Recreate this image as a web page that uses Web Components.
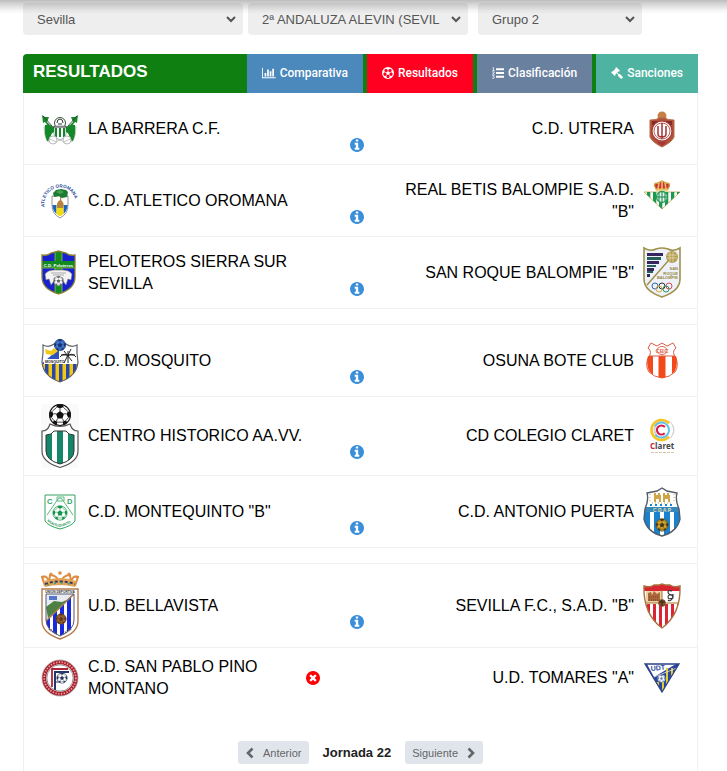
<!DOCTYPE html>
<html lang="es">
<head>
<meta charset="utf-8">
<meta name="viewport" content="width=device-width, initial-scale=1">
<title>Resultados</title>
<style>
  html, body { margin: 0; }
  body { background: #fff; color: #000; font-family: "Liberation Sans", Arial, sans-serif; font-size: 16px; line-height: 22px; }
</style>
</head>
<body>
<results-page></results-page>

<script>
const CIRCLE = 'q0 209-103 385.5t-279.5 279.5-385.5 103-385.5-103-279.5-279.5-103-385.5 103-385.5 279.5-279.5 385.5-103 385.5 103 279.5 279.5 103 385.5z';
const ICONS = {
  chart: ['0 0 2048 1792', '<path d="M640 896v512h-256v-512h256zm384-512v1024h-256v-1024h256zm1024 1152v128h-2048v-1536h128v1408h1920zm-640-896v768h-256v-768h256zm384-384v1152h-256v-1152h256z"/>'],
  ball: ['0 0 24 24', '<path fill-rule="evenodd" d="M12 0a12 12 0 1 0 0 24a12 12 0 0 0 0-24zM7.6 3.5L12 6L16.4 3.5L19.5 6L18.5 10L21.6 13.5L20 17.5L15.6 17.8L13.8 21.8H10.2L8.4 17.8L4 17.5L2.4 13.5L5.5 10L4.500 6z"/><path d="M12 8l4 3-1.500 4.600h-5L8 11z"/><path fill="none" stroke="currentColor" stroke-width="1.500" d="M12 8V5M16 11l3-1M14.500 15.500l2 3M9.500 15.500l-2 3M8 11l-3-1"/>'],
  list: ['0 0 24 24', '<path d="M8 2.500h16v4H8zM8 10h16v4H8zM8 17.500h16v4H8z"/><path fill="none" stroke="currentColor" stroke-width="1.500" d="M1 2l2-1v6M.5 7.200h5M.5 10h4v1.500L1 14.500h4M.5 17.500h4l-2 2.200q2.500 0 2 2t-4 1"/>'],
  gavel: ['0 0 1792 1792', '<path d="M1771 1536q0 53-37 90l-107 108q-39 37-91 37-53 0-90-37l-363-364q-38-36-38-90 0-53 43-96l-256-256-126 126q-14 14-34 14t-34-14q2 2 12.5 12t12.5 13 10 11.5 10 13.5 6 13.5 5.5 16.5 1.5 18q0 38-28 68-3 3-16.5 18t-19 20.5-18.5 16.5-22 15.5-22 9-26 4.5q-40 0-68-28l-408-408q-28-28-28-68 0-13 4.5-26t9-22 15.5-22 16.5-18.5 20.5-19 18-16.5q30-28 68-28 10 0 18 1.5t16.5 5.5 13.5 6 13.5 10 11.5 10 13 12.5 12 12.5q-14-14-14-34t14-34l348-348q14-14 34-14t34 14q-2-2-12.5-12t-12.5-13-10-11.5-10-13.5-6-13.5-5.5-16.5-1.5-18q0-38 28-68 3-3 16.5-18t19-20.5 18.5-16.5 22-15.5 22-9 26-4.5q40 0 68 28l408 408q28 28 28 68 0 13-4.5 26t-9 22-15.5 22-16.5 18.5-20.5 19-18 16.5q-30 28-68 28-10 0-18-1.5t-16.5-5.5-13.5-6-13.5-10-11.5-10-13-12.5-12-12.5q14 14 14 34t-14 34l-126 126 256 256q43-43 96-43 52 0 91 37l363 363q37 39 37 91z"/>'],
  info: ['128 128 1536 1536', '<path d="M1152 1376v-160q0-14-9-23t-23-9h-96v-512q0-14-9-23t-23-9h-320q-14 0-23 9t-9 23v160q0 14 9 23t23 9h96v320h-96q-14 0-23 9t-9 23v160q0 14 9 23t23 9h448q14 0 23-9t9-23zm-128-896v-160q0-14-9-23t-23-9h-192q-14 0-23 9t-9 23v160q0 14 9 23t23 9h192q14 0 23-9t9-23zm640 416' + CIRCLE + '"/>'],
  cancel: ['128 128 1536 1536', '<path d="M1277 1122q0-26-19-45l-181-181 181-181q19-19 19-45 0-27-19-46l-90-90q-19-19-46-19-26 0-45 19l-181 181-181-181q-19-19-45-19-27 0-46 19l-90 90q-19 19-19 46 0 26 19 45l181 181-181 181q-19 19-19 45 0 27 19 46l90 90q19 19 46 19 26 0 45-19l181-181 181 181q19 19 45 19 27 0 46-19l90-90q19-19 19-46zm387-226' + CIRCLE + '"/>'],
  prev: ['0 0 10 12', '<path fill="none" stroke="currentColor" stroke-width="2.6" d="M7.500 1.500L3 6l4.500 4.500"/>'],
  next: ['0 0 10 12', '<path fill="none" stroke="currentColor" stroke-width="2.6" d="M2.500 1.500L7 6l-4.500 4.500"/>']
};

const ball = (x, y, r, ink, paper = '#fff') => {
  const s = r / 10;
  return `<g transform="translate(${x} ${y}) scale(${s})"><circle r="9.500" fill="${paper}" stroke="${ink}" stroke-width="1"/>
    <path fill="${ink}" d="M0-3.600L3.600-1L2.200 3.200H-2.200L-3.600-1zM-3-9.500Q0-10 3-9.500L3.200-7.200L0-5.800L-3.200-7.200zM9.400-2.500L7-3.500L6-.5L7.500 2.500L9.300 2zM-9.400-2.500L-7-3.500L-6-.5L-7.500 2.500L-9.300 2zM6.600 7L5.500 4.800L2.800 6L2.600 9.200zM-6.600 7L-5.500 4.800L-2.800 6L-2.600 9.200z"/>
    <path stroke="${ink}" stroke-width=".7" fill="none" d="M0-3.600V-6M3.600-1L6-1.200M2.200 3.200L3.500 6M-2.200 3.200L-3.500 6M-3.600-1L-6-1.200M3-7L7-3.500M-3-7L-7-3.500M7.500 2.500L5.500 5M-7.500 2.500L-5.500 5M-2.800 6.500H2.800"/></g>`;
};
const stripes = (xs, w, y, h, color) => `<path fill="${color}" d="${xs.map(x => `M${x} ${y}h${w}v${h}h-${w}z`).join('')}"/>`;

/* Club crests: [width, height, drawing] */
const CRESTS = {
  barrera: [38, 32, `
    <path fill="#198a2b" d="M1 2l3 2 4 0-2 5 4 4-2 1-4-5-2 1zM37 2l-3 2-4 0 2 5-4 4 2 1 4-5 2 1z"/>
    <path stroke="#333" stroke-width=".8" d="M2 3l10 11M36 3L26 14"/>
    <path fill="#fff" stroke="#aaa" stroke-width=".6" d="M3 14q4-3 9 0l7 5 7-5q5-3 9 0 0 9-3 14-6 3-13-1-7 4-13 1-3-5-3-14z"/>
    <path fill="#148927" d="M4 12q6-1 9 3v4q-4 1-3 8l-4 1q-3-7-2-16zM34 12q-6-1-9 3v4q4 1 3 8l4 1q3-7 2-16z"/>
    <circle cx="19" cy="10" r="5.500" fill="#fff" stroke="#34563a"/><path fill="none" stroke="#333" d="M16 10q0-4 3-4t3 4M17 11h4"/>
    <path fill="#fff" stroke="#456" stroke-width=".5" d="M13 13h12v8q-1 5-6 6-5-1-6-6z"/>
    <path stroke="#333" d="M12 14h14"/>${stripes([14, 18, 22], 2, 15, 9, '#148927')}
    <circle cx="12" cy="27" r="4" fill="#fff" stroke="#bbb"/><circle cx="26" cy="27" r="4" fill="#fff" stroke="#bbb"/><path stroke="#999" fill="none" stroke-width=".6" d="M9 26l6 3M23 29l6-3"/>`],
  oromana: [38, 38, `
    <defs><path id="arc" d="M3.500 25C1 -1 37 -1 34.500 25"/></defs>
    <text font-size="4.600" font-weight="700" fill="#2b4a9c" font-family="Liberation Sans"><textPath href="#arc">ATLETICO OROMANA</textPath></text>
    <path fill="#fff" stroke="#666" stroke-width=".7" d="M11 14h16v9q0 9-8 13-8-4-8-13z"/>
    <path fill="#1665c0" d="M11.500 23h4v9q-4-4-4-9zM22.500 23h4q0 5-4 9z"/>
    <path fill="#f4dc13" d="M15.500 24h7v8l-3.500 2.500-3.500-2.500z"/>
    <path fill="#b6843c" d="M19 13h2l-1 5q4 3 2 8h-6q-1-6 3-8z"/>
    <path fill="#1f7a35" d="M12 11l3-3 5-1 5 1 2 2-1 5-5 1-3-2-5 1z"/><path fill="#48a34a" d="M15 10l4-2 4 2-4 2z"/>`],
  peloteros: [38, 46, `
    <clipPath id="c"><path d="M1 5q6 1 9-2l7.500-2L25 3q3 3 9 2v22q0 12-16.500 17Q1 39 1 27z"/></clipPath>
    <g clip-path="url(#c)"><path fill="#1721cf" d="M0 0h36v46H0z"/><path fill="#118a21" d="M14 0h7v46h-7zM0 11h36v7H0z"/>
    <path stroke="#cce032" stroke-width=".6" fill="none" d="M14 0v11M21 0v11M14 18v28M21 18v28M0 18h36"/></g>
    <path fill="none" stroke="#8a8132" stroke-width="1.300" d="M1 5q6 1 9-2l7.500-2L25 3q3 3 9 2v22q0 12-16.500 17Q1 39 1 27z"/>
    <text x="17.500" y="16.500" text-anchor="middle" font-size="4.300" font-weight="700" fill="#fff" font-family="Liberation Sans">C.D. Peloteros</text>
    <path fill="#f3f3f3" stroke="#777" stroke-width=".6" d="M4 24q3-4 9-4h9q6 0 9 4l-1 6-3-1-2 6-3-4 0-3q-4-2-9 0v3l-3 4-2-6-3 1z"/><path stroke="#999" stroke-width=".8" d="M10 23h15M12 25h11"/>${ball(17.500, 31, 5, '#666')}`],
  mosquito: [38, 44, `
    <clipPath id="c"><path d="M2 6q6 3 11-1h12q5 4 11 1v8l1 9q-1 14-18 20Q2 37 1 23l1-9z"/></clipPath>
    <g clip-path="url(#c)"><path fill="#fff" d="M0 0h38v44H0z"/><path fill="#f3c811" d="M0 25h38v19H0z"/>${stripes([4, 11, 18, 25, 32], 3.500, 25, 19, '#2847ad')}
    <path fill="#3152bd" d="M0 25L18 10V25z"/><path fill="#f2c817" d="M4 10l6 2 3-3 4 3-5 4-7-1z"/><path fill="#fff" d="M3 20h21v5H3z"/></g>
    <path fill="none" stroke="#606369" stroke-width="1.200" d="M2 6q6 3 11-1h12q5 4 11 1v8l1 9q-1 14-18 20Q2 37 1 23l1-9z"/>
    <path fill="none" stroke="#222" stroke-width="1" d="M20 16h14M27 12v12M23 12l8 10M30 10l-7 14M19 18q4-5 8-1 4-4 8 1"/>
    <text x="4" y="24" font-size="3.600" font-weight="700" fill="#222" font-family="Liberation Sans">MOSQUITO</text>
    ${ball(19, 6, 6, '#173276', '#4577c8')}`],
  centro: [38, 64, `
    <path fill="#fafafa" d="M0 0h38v64H0z"/>${ball(19, 11, 11, '#111')}
    <path fill="#fff" stroke="#555" stroke-width="1.200" d="M1 27q6 0 8-7 10 5 20 0 2 7 8 7v20q0 11-18 16.500Q1 58 1 47z"/>
    <clipPath id="c"><path d="M5 31q6 0 8-4h12q2 4 8 4v16q0 9-14 13Q5 56 5 47z"/></clipPath>
    <g clip-path="url(#c)"><path fill="#fff" d="M0 20h38v44H0z"/>${stripes([5, 16, 27], 6, 20, 44, '#16866b')}</g>
    <path fill="none" stroke="#333" stroke-width="1" d="M5 31q6 0 8-4h12q2 4 8 4v16q0 9-14 13Q5 56 5 47z"/>`],
  montequinto: [38, 36, `
    <path fill="#fff" stroke="#32a362" stroke-width="1" d="M4 1h30v26q-3 5-15 8Q7 32 4 27z"/>
    <path fill="none" stroke="#5cbb80" d="M6 21L17 5q2-2 4 0l11 16M16 3h7v4h-7z"/>
    <text x="6" y="10" font-size="7.500" font-weight="700" fill="#32a362" font-family="Liberation Sans">C</text><text x="26" y="10" font-size="7.500" font-weight="700" fill="#32a362" font-family="Liberation Sans">D</text>
    ${ball(19, 19, 7.500, '#16964a')}
    <defs><path id="arc" d="M6 27Q19 39 34 25"/></defs><text font-size="3.500" font-weight="700" fill="#259657" font-family="Liberation Sans"><textPath href="#arc">MONTEQUINTO</textPath></text>`],
  bellavista: [38, 69, `
    <path fill="none" stroke="#d98c42" stroke-width="2" d="M4 15L1 6q6-2 7 6l1-8q7 0 10 8 3-8 10-8l1 8q1-8 7-6l-3 9"/>
    <g fill="#df8d3f"><circle cx="2" cy="6" r="1.500"/><circle cx="10" cy="3" r="1.500"/><circle cx="19" cy="2" r="1.800"/><circle cx="28" cy="3" r="1.500"/><circle cx="36" cy="6" r="1.500"/></g>
    <path fill="#e5a255" d="M3 10q16-6 32 0l-1 6q-15-4-30 0z"/><path stroke="#333d62" stroke-width="2" stroke-dasharray="3 2" fill="none" d="M4 13q15-5 30 0"/><path stroke="#36a28f" stroke-width="1.500" stroke-dasharray="2 5" fill="none" d="M6 14q13-4 26 0"/>
    <clipPath id="c"><path d="M5 23h28v26q0 10-14 16Q5 59 5 49z"/></clipPath>
    <path fill="#fff" stroke="#b57b4c" stroke-width="1.400" d="M1 18h36v32q0 12-18 18Q1 62 1 50z"/>
    <g clip-path="url(#c)"><path fill="#fff" d="M0 20h38v49H0z"/>${stripes([5, 12, 19, 26], 4, 20, 49, '#1829e0')}<path fill="#e8ecf1" d="M5 23h27L5 50z"/><path fill="#4d8042" d="M5 36l8-6 8 1 9-4L7 47z"/><path fill="#5876c9" d="M8 25h8v4H8z"/><path stroke="#a97c4a" stroke-width="1.500" d="M33 23L5 50"/></g>
    <path fill="none" stroke="#555b72" d="M5 23h28v26q0 10-14 16Q5 59 5 49z"/>
    <text x="19" y="22" text-anchor="middle" font-size="3.200" font-weight="700" fill="#333" font-family="Liberation Sans">UNION DEPORTIVA</text>
    ${ball(20, 48, 5.500, '#60361b', '#8f6333')}
    <path stroke="#555" stroke-width="2" stroke-dasharray="1 1" fill="none" d="M8 58l8 5M30 58l-8 5"/>`],
  sanpablo: [38, 38, `
    <circle cx="19" cy="19" r="15.800" fill="#fff" stroke="#ad1f2c" stroke-width="4"/>
    <circle cx="19" cy="19" r="15.800" fill="none" stroke="#e9a4a8" stroke-width="1.800" stroke-dasharray="1.300 1.500"/>
    <circle cx="19" cy="19" r="13.200" fill="none" stroke="#666" stroke-width=".7"/><circle cx="19" cy="19" r="18" fill="none" stroke="#777" stroke-width=".5"/>
    <path fill="none" stroke="#b2233a" stroke-width="1.800" d="M11 28V10h16"/><path fill="none" stroke="#24386c" stroke-width="2" d="M14 31V13h14"/><path stroke="#24386c" d="M14 23h5"/>
    ${ball(21, 19, 5.500, '#29345d')}`],
  utrera: [38, 38, `
    <circle cx="19" cy="6" r="4.500" fill="#c77f49"/><path fill="#b0523b" stroke="#b96b45" d="M7 10q7 0 9-2h6q2 2 9 2v17q-2 5-12 10Q9 32 7 27z"/>
    <path fill="#842c2b" d="M9 11h20v4H9z"/><circle cx="19" cy="21" r="10" fill="#fff" stroke="#a63c35" stroke-width="1.200"/><circle cx="19" cy="21" r="8" fill="none" stroke="#a63c35" stroke-width=".8"/>
    <path fill="none" stroke="#a33333" stroke-width="1.500" d="M15 16v8q0 3 4 3t4-3v-8M19 13v16"/>
    <path fill="#a43737" d="M14 32h10l-5 4z"/>`],
  betis: [38, 44, `
    <path fill="#fff" stroke="#d5b46b" stroke-width="1" d="M1 13h36L19 30z"/>
    <clipPath id="c"><path d="M1 13h36L19 30z"/></clipPath><g clip-path="url(#c)">${stripes([4, 10, 16, 22, 28, 34], 3.300, 13, 18, '#199a4e')}</g>
    <circle cx="19" cy="18" r="5.500" fill="#dff4e5" stroke="#229a52" stroke-width="1.300"/><path stroke="#16844a" stroke-width="1" d="M16 14v8M19 13v10M22 14v8M14 18h10"/>
    <path fill="#cc333d" stroke="#cfa143" stroke-width="1.300" d="M13 10q-4-6 2-6l4-2 4 2q6 0 2 6z"/><path stroke="#ebc466" stroke-width="1.500" fill="none" d="M19 1v9M16 4l-1 6M22 4l1 6M13 11h12"/>`],
  sanroque: [38, 51, `
    <path fill="#edf1f9" stroke="#a1914b" stroke-width="1.600" d="M1 1q7 4 12 1 6-2 12 0 5 3 12-1v31q0 12-18 18Q1 44 1 32z"/>
    <path fill="#37265d" d="M4 6h16v3H4zM4 14h12v3H4zM4 21h7v3H4zM4 27h3v3H4z"/><path fill="#285d5a" d="M4 10h14v3H4zM4 18h9v2H4zM4 24h6v2H4z"/>
    <path stroke="#a18b3f" stroke-width="1.300" d="M4 38L25 14"/><circle cx="29" cy="10" r="6" fill="#b29d54"/><path stroke="#ece1b5" stroke-width=".7" fill="none" d="M24 8h10M24 11h10M27 5v10M30 5v10"/>
    <g font-family="Liberation Sans" font-weight="700" font-size="4" fill="#9a8640" text-anchor="end"><text x="35" y="23">SAN</text><text x="35" y="28">ROQUE</text><text x="35" y="32">BALOMPIE</text></g>
    <g fill="none" stroke-width="1"><circle cx="12" cy="39" r="3" stroke="#2c67b3"/><circle cx="19" cy="39" r="3" stroke="#333"/><circle cx="26" cy="39" r="3" stroke="#d64959"/><circle cx="16" cy="42" r="3" stroke="#d4ae3b"/><circle cx="23" cy="42" r="3" stroke="#36925f"/></g>`],
  osuna: [38, 40, `
    <clipPath id="c"><path d="M5 15h28q2 8-1 15-5 6-13 7-8-1-13-7-3-7-1-15z"/></clipPath>
    <path fill="#fff" stroke="#d85e46" stroke-width="1" d="M8 2l6 3 5-3 5 3 6-3 3 5q-5 4 0 10 3 8-1 14-5 5-13 6-8-1-13-6-4-6-1-14 5-6 0-10z"/>
    <g clip-path="url(#c)">${stripes([3, 15.500, 29], 7, 15, 23, '#f44a1b')}</g>
    <path stroke="#d85e46" d="M6 15h26"/><text x="19" y="12" text-anchor="middle" font-size="6" font-weight="700" fill="#df6a50" font-family="Liberation Sans">CBC</text><ellipse cx="19" cy="9.500" rx="5" ry="4" fill="none" stroke="#df6a50"/>`],
  claret: [38, 38, `
    <g fill="none"><circle cx="21" cy="13" r="9.500" stroke="#cdd1d6" stroke-width="2"/><circle cx="18.500" cy="13" r="10" stroke="#fff" stroke-width="3"/>
    <circle cx="18.500" cy="13" r="10" stroke="#f7c324" stroke-width="2.600" stroke-dasharray="48 15" transform="rotate(42 18.500 13)"/>
    <circle cx="18.500" cy="13" r="7.500" stroke="#62bfe6" stroke-width="2" stroke-dasharray="38 9" transform="rotate(-150 18.500 13)"/>
    <circle cx="18.500" cy="13" r="4.500" stroke="#d51d49" stroke-width="2.200" stroke-dasharray="21 8" transform="rotate(45 18.500 13)"/></g>
    <text x="7" y="32" font-size="8" font-weight="700" fill="#444" font-family="Open Sans, sans-serif"><tspan fill="#c91e49">C</tspan>laret</text><path stroke="#d2c8a8" stroke-dasharray="3 1" d="M8 35.500h23"/>`],
  puerta: [38, 50, `
    <clipPath id="c"><path d="M4 6L14 4l5-3 5 3 10 2q-2 7 2 16l1 10q-3 13-18 17Q4 45 1 32l1-10Q6 13 4 6z"/></clipPath>
    <g clip-path="url(#c)"><path fill="#fff" d="M0 0h38v50H0z"/>${stripes([1, 11, 21, 31], 6, 25, 25, '#1982cf')}<path fill="#3789bc" d="M0 20h38v5H0z"/></g>
    <path fill="#d0a548" d="M11 6h2v2h2V6h2v2h1v7h-2v-3h-3v3h-2zM20 6h2v2h2V6h2v2h1v7h-2v-3h-3v3h-2z"/><path stroke="#d0a548" stroke-dasharray="1 2" d="M7 7v8M31 7v8M9 16h20"/>
    <path stroke="#1982cf" stroke-width="2" stroke-dasharray="2 3" d="M7 18h25"/>
    <text x="19" y="24.500" text-anchor="middle" font-size="5" font-weight="700" fill="#e6dcaa" font-family="Liberation Sans">C D A P</text>
    ${ball(19, 38, 6.500, '#4a3b19', '#d0a12c')}
    <path fill="none" stroke="#535c67" stroke-width="1.400" d="M4 6L14 4l5-3 5 3 10 2q-2 7 2 16l1 10q-3 13-18 17Q4 45 1 32l1-10Q6 13 4 6z"/>`],
  sevilla: [38, 46, `
    <clipPath id="c"><path d="M1 3q6 2 10-1h5l3-1 3 1h5q4 3 10 1 1 28-18 42Q0 31 1 3z"/></clipPath>
    <g clip-path="url(#c)"><path fill="#fff" d="M0 0h38v46H0z"/><path fill="#d92531" d="M0 0h38v8H0z"/>${stripes([4, 10, 16, 22, 28, 34], 3, 21, 25, '#dd2434')}<path fill="#ead4a7" d="M3 8h16v12H3z"/><path stroke="#a8752d" d="M3 20h32M19 7v13"/></g>
    <path fill="#ad6638" d="M5 10l3-1 1 3 2-4 3 3 3-2v9H5z"/><path stroke="#6b4038" stroke-dasharray="1 1" d="M6 14h10M6 17h10"/>
    <path fill="none" stroke="#333" stroke-width="1.100" d="M29 8q-4-1-4 1t3 3 1 4-4 1M30 12q-5-1-5 2t5 1v-4"/>
    <circle cx="19" cy="20" r="3.800" fill="#80532e"/><path stroke="#372614" d="M16 19h6M19 17v6"/>
    <path fill="none" stroke="#a9713e" stroke-width="1.400" d="M1 3q6 2 10-1h5l3-1 3 1h5q4 3 10 1 1 28-18 42Q0 31 1 3z"/>`],
  tomares: [38, 32, `
    <clipPath id="c"><path d="M2 2h34L19 30z"/></clipPath><g clip-path="url(#c)"><path fill="#2946a0" d="M0 0h38v32H0z"/><path fill="#fff" d="M4 2h29L11 15z"/>${stripes([23, 28], 2, 6, 20, '#e0cb34')}${stripes([14, 19], 2, 20, 12, '#e0cb34')}<path stroke="#e8e8c8" stroke-width=".8" d="M11 15L34 6"/></g>
    <text x="8" y="9" transform="rotate(-6 8 9)" font-size="7" font-weight="700" fill="#2946a0" font-family="Liberation Sans">UDT</text>
    ${ball(18.500, 16.500, 4, '#6b7fa6')}
    <path fill="none" stroke="#2e4285" stroke-width="1.300" d="M2 2h34L19 30z"/>`]
};

const define = (name, render) => customElements.define(name, class extends HTMLElement {
  constructor() {
    super();
    this.attachShadow({ mode: 'open' });
  }
  connectedCallback() {
    const t = document.createElement('template');
    t.innerHTML = render(this);
    this.shadowRoot.replaceChildren(t.content.cloneNode(true));
  }
});

define('ui-icon', el => {
  const [box, body] = ICONS[el.getAttribute('name')];
  return `<style>:host{display:inline-flex;height:14px}svg{display:block;height:100%;width:auto}</style>
    <svg viewBox="${box}" fill="currentColor" aria-hidden="true">${body}</svg>`;
});

define('club-crest', el => {
  const [w, h, body] = CRESTS[el.getAttribute('name')];
  return `<style>:host{display:block;flex:none}svg{display:block;overflow:visible}</style>
    <svg width="${w}" height="${h}" viewBox="0 0 ${w} ${h}" aria-hidden="true">${body}</svg>`;
});

define('filter-select', el => `
  <style>
    :host { display: block; }
    select { width: 100%; height: 32px; border: 0; border-right: 4px solid #eee; border-radius: 4px; padding: 0 8px 0 10px; background: #eee; color: #555;
      font: 13px/20px "Liberation Sans", Arial, sans-serif; }
  </style>
  <select aria-label="${el.getAttribute('label')}"><option>${el.getAttribute('value')}</option></select>`);

define('nav-tab', () => `
  <style>
    :host { display: block; }
    a { display: flex; align-items: center; gap: 4px; height: 38px; padding: 0 15px 1px; background: var(--tab); color: #fff; text-decoration: none;
      font: 500 12px/18px Roboto, "Liberation Sans", sans-serif; white-space: nowrap; }
    ::slotted(ui-icon) { height: 12px; }
  </style>
  <a href="#"><slot name="icon"></slot><slot></slot></a>`);

define('team-side', () => `
  <style>
    :host { display: flex; align-items: center; gap: 9px; min-width: 0; }
    :host([side="away"]) { flex-direction: row-reverse; text-align: right; }
    .name { flex: 1; min-width: 0; }
  </style>
  <slot name="crest"></slot><span class="name"><slot></slot></span>`);

define('match-row', el => {
  const a = n => el.getAttribute(n);
  const off = el.hasAttribute('cancelled');
  return `
  <style>
    :host { display: grid; grid-template-columns: 265fr 95fr 280fr; align-items: center; box-sizing: border-box; min-height: 72px;
      padding: 7px 16px 7px 17px; border-bottom: 1px solid #f0f0f0; }
    :host([cancelled]) { border-bottom: 0; min-height: 60px; }
    button { justify-self: center; margin: 32px 0 0 7px; padding: 0; border: 0; background: none; color: #3a8fd9; display: flex; }
    :host([cancelled]) button { justify-self: start; margin: 0; color: #f00; }
  </style>
  <team-side><club-crest slot="crest" name="${a('home-crest')}"></club-crest>${a('home')}</team-side>
  <button type="button" aria-label="${off ? 'Partido anulado' : 'Información'}"><ui-icon name="${off ? 'cancel' : 'info'}"></ui-icon></button>
  <team-side side="away"><club-crest slot="crest" name="${a('away-crest')}"></club-crest>${a('away')}</team-side>`;
});

define('match-group', () => `
  <style>
    :host { display: block; }
    :host(:not(:first-of-type)) { margin-top: 15px; border-top: 1px solid #f0f0f0; }
  </style><slot></slot>`);

define('round-pager', () => `
  <style>
    :host { display: flex; justify-content: center; align-items: center; gap: 14px; padding: 33px 0 8px; }
    button { display: flex; align-items: center; gap: 8px; height: 23px; padding: 0 7px; border: 0; border-radius: 3px; background: #e0e5ec; color: #666;
      font: 11px/16px "Liberation Sans", Arial, sans-serif; }
    ui-icon { height: 12px; }
    strong { font: 700 13px/20px "Liberation Sans", Arial, sans-serif; color: #222; }
  </style>
  <button type="button"><ui-icon name="prev"></ui-icon>Anterior</button>
  <strong><slot></slot></strong>
  <button type="button">Siguiente<ui-icon name="next"></ui-icon></button>`);

define('results-page', () => `
  <style>
    :host { display: flex; flex-direction: column; min-height: 100vh; box-sizing: border-box; padding: 3px 29px 0 23px; position: relative; }
    .shade { position: absolute; inset: 0 0 auto; height: 14px; pointer-events: none;
      background: linear-gradient(rgba(0,0,0,.26), rgba(0,0,0,.16) 30%, rgba(0,0,0,.04) 75%, transparent); }
    .filters { display: grid; grid-template-columns: repeat(3, 1fr); margin-bottom: 19px; }
    .filters filter-select { margin-right: 5px; }
    .filters filter-select:last-child { margin: 0 25% 0 5px; }
    header { display: flex; justify-content: space-between; background: #107f12; border-radius: 4px 0 0 0; overflow: hidden; }
    h1 { margin: 0; padding: 7px 10px; font-size: 17px; line-height: 22px; color: #fff; }
    nav { display: flex; gap: 4px; }
    main { flex: 1; border: solid #f0f0f0; border-width: 0 1px; }
  </style>
  <div class="shade"></div>
  <div class="filters">
    <filter-select label="Provincia" value="Sevilla"></filter-select>
    <filter-select label="Competición" value="2ª ANDALUZA ALEVIN (SEVILLA)"></filter-select>
    <filter-select label="Grupo" value="Grupo 2"></filter-select>
  </div>
  <header>
    <h1>RESULTADOS</h1>
    <nav>
      <nav-tab style="--tab:#4b88bb"><ui-icon slot="icon" name="chart"></ui-icon>Comparativa</nav-tab>
      <nav-tab style="--tab:#ff0021"><ui-icon slot="icon" name="ball"></ui-icon>Resultados</nav-tab>
      <nav-tab style="--tab:#69809f"><ui-icon slot="icon" name="list"></ui-icon>Clasificación</nav-tab>
      <nav-tab style="--tab:#4fb3a1"><ui-icon slot="icon" name="gavel"></ui-icon>Sanciones</nav-tab>
    </nav>
  </header>
  <main>
    <match-group>
      <match-row home="LA BARRERA C.F." home-crest="barrera" away="C.D. UTRERA" away-crest="utrera"></match-row>
      <match-row home="C.D. ATLETICO OROMANA" home-crest="oromana" away="REAL BETIS BALOMPIE S.A.D. &quot;B&quot;" away-crest="betis"></match-row>
      <match-row home="PELOTEROS SIERRA SUR SEVILLA" home-crest="peloteros" away="SAN ROQUE BALOMPIE &quot;B&quot;" away-crest="sanroque"></match-row>
    </match-group>
    <match-group>
      <match-row home="C.D. MOSQUITO" home-crest="mosquito" away="OSUNA BOTE CLUB" away-crest="osuna"></match-row>
      <match-row home="CENTRO HISTORICO AA.VV." home-crest="centro" away="CD COLEGIO CLARET" away-crest="claret"></match-row>
      <match-row home="C.D. MONTEQUINTO &quot;B&quot;" home-crest="montequinto" away="C.D. ANTONIO PUERTA" away-crest="puerta"></match-row>
    </match-group>
    <match-group>
      <match-row home="U.D. BELLAVISTA" home-crest="bellavista" away="SEVILLA F.C., S.A.D. &quot;B&quot;" away-crest="sevilla"></match-row>
      <match-row cancelled home="C.D. SAN PABLO PINO MONTANO" home-crest="sanpablo" away="U.D. TOMARES &quot;A&quot;" away-crest="tomares"></match-row>
    </match-group>
    <round-pager>Jornada 22</round-pager>
  </main>`);
</script>
</body>
</html>
